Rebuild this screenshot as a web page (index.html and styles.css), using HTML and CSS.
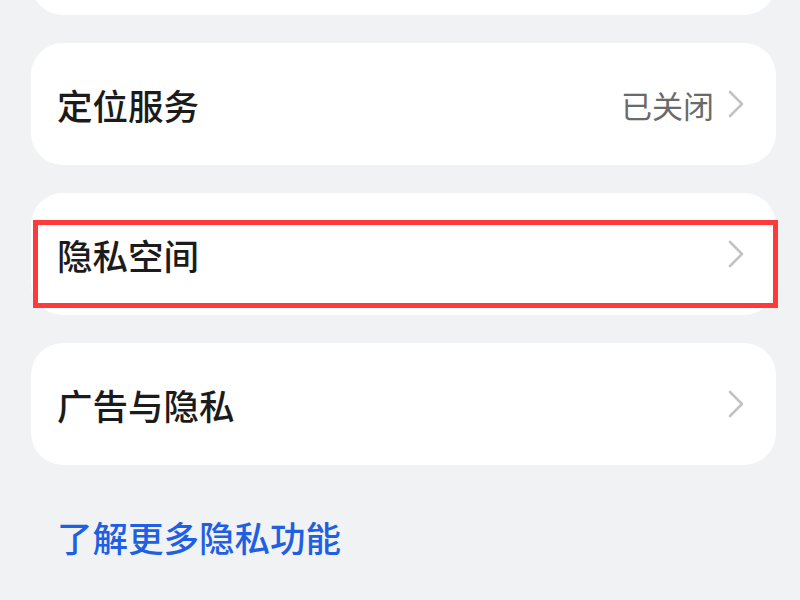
FILE: index.html
```html
<!DOCTYPE html>
<html lang="zh-CN">
<head>
<meta charset="utf-8">
<title>隐私</title>
<link rel="stylesheet" href="styles.css">
</head>
<body>
<main class="page">
  <section class="card card-top"></section>
  <section class="card">
    <div class="row">
      <span class="label">定位服务</span>
      <span class="trail"><span class="value">已关闭</span>
        <svg class="chev" viewBox="0 0 16 28" width="16" height="28"><path d="M2 2 L14 14 L2 26" fill="none" stroke="#c3c3c3" stroke-width="2.6" stroke-linecap="round" stroke-linejoin="round"/></svg>
      </span>
    </div>
  </section>
  <section class="card card-marked">
    <div class="row">
      <span class="label">隐私空间</span>
      <span class="trail">
        <svg class="chev" viewBox="0 0 16 28" width="16" height="28"><path d="M2 2 L14 14 L2 26" fill="none" stroke="#c3c3c3" stroke-width="2.6" stroke-linecap="round" stroke-linejoin="round"/></svg>
      </span>
    </div>
    <div class="highlight"></div>
  </section>
  <section class="card">
    <div class="row">
      <span class="label">广告与隐私</span>
      <span class="trail">
        <svg class="chev" viewBox="0 0 16 28" width="16" height="28"><path d="M2 2 L14 14 L2 26" fill="none" stroke="#c3c3c3" stroke-width="2.6" stroke-linecap="round" stroke-linejoin="round"/></svg>
      </span>
    </div>
  </section>
  <a class="more" href="#">了解更多隐私功能</a>
</main>
</body>
</html>
```
FILE: styles.css
```css
html, body {
  margin: 0;
  padding: 0;
  background: #f1f2f4;
  height: 100%;
  overflow: hidden;
}
body {
  font-family: "Noto Sans CJK SC", "Noto Sans", sans-serif;
  color: #1a1a1a;
}
.page {
  display: flex;
  flex-direction: column;
  gap: 28px;
  padding: 0 24px 0 31px;
}
.card {
  position: relative;
  background: #ffffff;
  border-radius: 32px;
  height: 122px;
  box-sizing: border-box;
}
.card-top {
  margin-top: -107px;
}
.row {
  height: 100%;
  display: flex;
  align-items: center;
  justify-content: space-between;
  padding: 0 32px 0 26px;
}
.label {
  font-size: 35.5px;
  font-weight: 500;
  color: #1b1b1b;
}
.trail {
  display: flex;
  align-items: center;
  gap: 14px;
}
.value {
  font-size: 31px;
  color: #6a6a6a;
}
.chev {
  display: block;
}
.highlight {
  position: absolute;
  left: 2px;
  right: -2px;
  top: 27px;
  height: 88px;
  box-sizing: border-box;
  border: 5px solid #ff3a3a;
}
.more {
  margin-top: 20px;
  padding-left: 26px;
  font-size: 35.5px;
  font-weight: 500;
  line-height: 48px;
  color: #1f5fe3;
  text-decoration: none;
}
```
